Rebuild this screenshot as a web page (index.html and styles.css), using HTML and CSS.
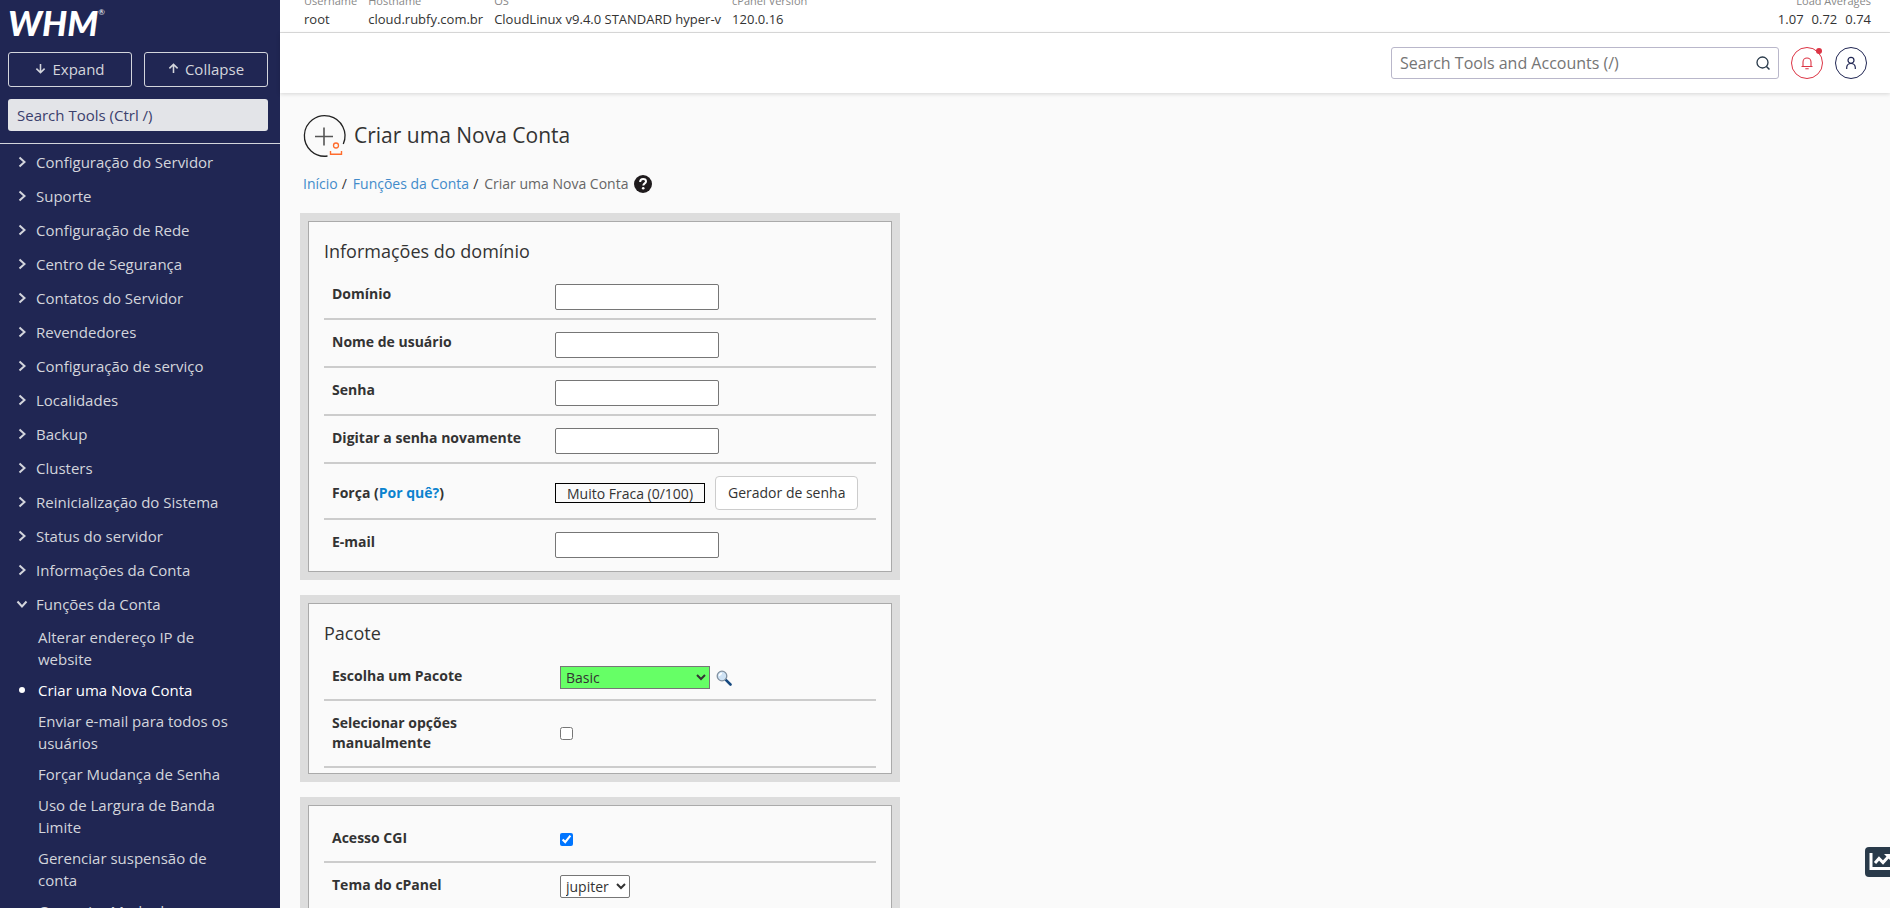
FILE: index.html
```html
<!DOCTYPE html>
<html lang="pt-BR">
<head>
<meta charset="utf-8">
<title>WHM - Criar uma Nova Conta</title>
<link rel="stylesheet" href="styles.css">
</head>
<body>
<svg class="sprite" aria-hidden="true">
  <symbol id="chev" viewBox="0 0 12 12"><path d="M3.500 1.500 8.500 6l-5 4.500" fill="none" stroke="currentColor" stroke-width="2"/></symbol>
</svg>
<div class="app">
  <aside class="sidebar">
    <div class="sidebar-top">
      <a class="logo" href="#">WHM<span class="logo-mark">®</span></a>
      <div class="tree-buttons">
        <button type="button" class="tree-button"><svg class="arrow" viewBox="0 0 12 12"><path d="M6 1v9.500M1.500 6.200 6 10.500l4.500-4.300" fill="none" stroke="currentColor" stroke-width="1.700"/></svg>Expand</button>
        <button type="button" class="tree-button"><svg class="arrow" viewBox="0 0 12 12"><path d="M6 11V1.500M1.500 5.800 6 1.500l4.500 4.300" fill="none" stroke="currentColor" stroke-width="1.700"/></svg>Collapse</button>
      </div>
      <input class="tool-search" type="text" placeholder="Search Tools (Ctrl /)" aria-label="Search Tools">
    </div>
    <nav class="menu">
      <a class="menu-item" href="#"><svg class="chev"><use href="#chev"/></svg>Configuração do Servidor</a>
      <a class="menu-item" href="#"><svg class="chev"><use href="#chev"/></svg>Suporte</a>
      <a class="menu-item" href="#"><svg class="chev"><use href="#chev"/></svg>Configuração de Rede</a>
      <a class="menu-item" href="#"><svg class="chev"><use href="#chev"/></svg>Centro de Segurança</a>
      <a class="menu-item" href="#"><svg class="chev"><use href="#chev"/></svg>Contatos do Servidor</a>
      <a class="menu-item" href="#"><svg class="chev"><use href="#chev"/></svg>Revendedores</a>
      <a class="menu-item" href="#"><svg class="chev"><use href="#chev"/></svg>Configuração de serviço</a>
      <a class="menu-item" href="#"><svg class="chev"><use href="#chev"/></svg>Localidades</a>
      <a class="menu-item" href="#"><svg class="chev"><use href="#chev"/></svg>Backup</a>
      <a class="menu-item" href="#"><svg class="chev"><use href="#chev"/></svg>Clusters</a>
      <a class="menu-item" href="#"><svg class="chev"><use href="#chev"/></svg>Reinicialização do Sistema</a>
      <a class="menu-item" href="#"><svg class="chev"><use href="#chev"/></svg>Status do servidor</a>
      <a class="menu-item" href="#"><svg class="chev"><use href="#chev"/></svg>Informações da Conta</a>
      <a class="menu-item" href="#"><svg class="chev chev-open"><use href="#chev"/></svg>Funções da Conta</a>
      <ul class="submenu">
        <li><a href="#">Alterar endereço IP de website</a></li>
        <li class="current"><a href="#">Criar uma Nova Conta</a></li>
        <li><a href="#">Enviar e-mail para todos os usuários</a></li>
        <li><a href="#">Forçar Mudança de Senha</a></li>
        <li><a href="#">Uso de Largura de Banda Limite</a></li>
        <li><a href="#">Gerenciar suspensão de conta</a></li>
        <li><a href="#">Gerenciar Modo de demonstração</a></li>
      </ul>
    </nav>
  </aside>

  <div class="page">
    <div class="status">
      <dl class="stat"><dt>Username</dt><dd>root</dd></dl>
      <dl class="stat"><dt>Hostname</dt><dd>cloud.rubfy.com.br</dd></dl>
      <dl class="stat"><dt>OS</dt><dd>CloudLinux v9.4.0 STANDARD hyper-v</dd></dl>
      <dl class="stat"><dt>cPanel Version</dt><dd>120.0.16</dd></dl>
      <dl class="stat stat-load"><dt>Load Averages</dt><dd><span>1.07</span><span>0.72</span><span>0.74</span></dd></dl>
    </div>
    <header class="header">
      <div class="search">
        <input type="text" placeholder="Search Tools and Accounts (/)" aria-label="Search Tools and Accounts">
        <button type="button" class="search-button" aria-label="Search"><svg viewBox="0 0 16 16"><circle cx="7.500" cy="7.500" r="5.500" fill="none" stroke="currentColor" stroke-width="1.300"/><path d="m11.500 11.500 3 3" stroke="currentColor" stroke-width="1.500"/></svg></button>
      </div>
      <button type="button" class="round round-alert" aria-label="Notifications">
        <svg viewBox="0 0 14 14"><path d="M1.500 10.500h11M3 10.500V6a4 4 0 0 1 8 0v4.500M5.300 12.800h3.400" fill="none" stroke="currentColor" stroke-width="1.100"/></svg>
        <span class="dot"></span>
      </button>
      <button type="button" class="round" aria-label="Account">
        <svg viewBox="0 0 14 14"><circle cx="7" cy="4.300" r="3" fill="none" stroke="currentColor" stroke-width="1.200"/><path d="M2.700 13V11.500A4.300 4.300 0 0 1 7 7.500a4.300 4.300 0 0 1 4.300 4V13" fill="none" stroke="currentColor" stroke-width="1.200"/></svg>
      </button>
    </header>

    <main class="content">
      <div class="title">
        <svg class="title-icon" viewBox="0 0 42 42"><path d="M40.300 29A20.300 20.300 0 1 0 24.500 41" fill="none" stroke="#222" stroke-width="1.300"/><path d="M21 12.500v18M12 21.500h18" stroke="#555" stroke-width="1.600"/><circle cx="33" cy="30.500" r="2.500" fill="none" stroke="#ff6c2c" stroke-width="1.300"/><path d="M27.500 36v3.200h11V36" fill="none" stroke="#ff6c2c" stroke-width="1.400"/></svg>
        <h1>Criar uma Nova Conta</h1>
      </div>
      <div class="crumbs">
        <a href="#">Início</a><span class="slash">/</span><a href="#">Funções da Conta</a><span class="slash">/</span><span class="here">Criar uma Nova Conta</span>
        <a class="help" href="#" aria-label="Help"><svg viewBox="0 0 18 18"><circle cx="9" cy="9" r="9" fill="#1f1b1d"/><path d="M6.100 7c.1-1.900 1.300-2.900 3-2.900s2.900 1 2.900 2.400c0 1.900-2.700 1.900-2.700 4" fill="none" stroke="#fff" stroke-width="2"/><circle cx="9.200" cy="13.200" r="1.300" fill="#fff"/></svg></a>
      </div>

      <section class="panel">
        <h2>Informações do domínio</h2>
        <div class="row"><label for="domain">Domínio</label><input class="field" id="domain" type="text"></div>
        <div class="row"><label for="user">Nome de usuário</label><input class="field" id="user" type="text"></div>
        <div class="row"><label for="pass">Senha</label><input class="field" id="pass" type="password"></div>
        <div class="row"><label for="pass2">Digitar a senha novamente</label><input class="field" id="pass2" type="password"></div>
        <div class="row row-strength"><span class="name">Força (<a href="#">Por quê?</a>)</span><div class="meter">Muito Fraca (0/100)</div><button type="button" class="generate">Gerador de senha</button></div>
        <div class="row row-last"><label for="mail">E-mail</label><input class="field" id="mail" type="text"></div>
      </section>

      <section class="panel">
        <h2>Pacote</h2>
        <div class="row row-option"><label for="plan">Escolha um Pacote</label><select class="pick pick-plan" id="plan"><option>Basic</option></select>
          <a class="lens" href="#" aria-label="Detalhes"><svg viewBox="0 0 16 16"><path d="m9.800 9.800 4.700 4.700" stroke="#174a80" stroke-width="2.600" stroke-linecap="round"/><circle cx="6" cy="6" r="4.800" fill="#cfe3f5" stroke="#8291a0" stroke-width="1.300"/><path d="M3.500 6A2.600 2.600 0 0 1 6 3.400" fill="none" stroke="#fff" stroke-width="1.500"/></svg></a></div>
        <div class="row row-manual"><label for="manual">Selecionar opções manualmente</label><input class="tick" id="manual" type="checkbox"></div>
      </section>

      <section class="panel panel-plain">
        <div class="row row-option"><label for="cgi">Acesso CGI</label><input class="tick" id="cgi" type="checkbox" checked></div>
        <div class="row row-option"><label for="theme">Tema do cPanel</label><select class="pick" id="theme"><option>jupiter</option></select></div>
      </section>
    </main>
  </div>
</div>
<button type="button" class="stats-tab" aria-label="Statistics"><svg viewBox="0 0 26 20"><path d="M2 1v15.500h24" fill="none" stroke="#fff" stroke-width="3"/><path d="m6 11 4-4.500 4 4L20 4" fill="none" stroke="#fff" stroke-width="3"/><path d="M15 2h7v7z" fill="#fff"/></svg></button>
</body>
</html>
```
FILE: styles.css
```css
* { box-sizing: border-box; }
body {
  margin: 0;
  background: #fafafa;
  color: #333;
  font: 14px/20px "Open Sans", "Noto Sans", sans-serif;
  overflow: hidden;
}
button, input, select { font: inherit; color: inherit; }
a { color: #428bca; text-decoration: none; }
svg { display: block; flex: none; }
.sprite { position: absolute; width: 0; height: 0; }
.app { display: flex; height: 100vh; }

/* Sidebar */
.sidebar {
  flex: none;
  width: 280px;
  overflow: hidden;
  background: #202653;
  color: #d3d5dc;
  font-size: 15px;
}
.sidebar-top {
  display: flex;
  flex-direction: column;
  gap: 12px;
  padding: 4px 12px 12px 8px;
  border-bottom: 1px solid #d3d5dc;
}
.logo {
  display: flex;
  align-items: flex-start;
  height: 36px;
  color: #fff;
  font: italic 900 35px/36px Lato, sans-serif;
}
.logo-mark { font: 8px/16px Lato, sans-serif; }
.tree-buttons { display: flex; gap: 12px; }
.tree-button {
  flex: 1;
  display: flex;
  align-items: center;
  justify-content: center;
  gap: 6px;
  height: 35px;
  padding: 0 0 2px;
  border: 1px solid #d3d5dc;
  border-radius: 3px;
  background: none;
}
.arrow { width: 11px; height: 11px; }
.tool-search {
  width: 100%;
  height: 32px;
  padding: 0 9px 1px;
  border: 0;
  border-radius: 3px;
  background: #e3e4e8;
}
.tool-search::placeholder { color: #3b406d; }
.menu { padding-top: 1px; }
.menu-item {
  display: flex;
  align-items: center;
  gap: 8px;
  height: 34px;
  padding-left: 16px;
  color: inherit;
}
.chev { width: 12px; height: 12px; }
.chev-open { transform: rotate(90deg); }
.submenu {
  display: flex;
  flex-direction: column;
  gap: 9px;
  margin: 0;
  padding: 5px 40px 0 38px;
  list-style: none;
  line-height: 22px;
}
.submenu a { color: inherit; }
.submenu .current { position: relative; color: #fff; }
.current::before {
  content: "";
  position: absolute;
  left: -19px;
  top: 8px;
  width: 6px;
  height: 6px;
  border-radius: 50%;
  background: #fff;
}

/* Top bars */
.page { flex: 1; min-width: 0; }
.status {
  display: flex;
  align-items: flex-end;
  gap: 11px;
  height: 33px;
  padding: 0 19px 4px 24px;
  overflow: hidden;
  border-bottom: 1px solid #ddd;
  background: #fff;
  font-size: 13px;
  line-height: 18px;
}
.stat { margin: 0; }
.stat dt { color: #888; font-size: 11px; }
.stat dd { display: flex; gap: 8px; margin: 0; }
.stat-load { margin-left: auto; text-align: right; }
.stat-load dd { justify-content: flex-end; }
.header {
  display: flex;
  align-items: center;
  justify-content: flex-end;
  gap: 12px;
  height: 60px;
  padding: 0 23px;
  background: #fff;
  box-shadow: 0 1px 4px rgba(0, 0, 0, .15);
}
.search {
  display: flex;
  align-items: center;
  flex: 0 1 388px;
  height: 32px;
  border: 1px solid #b9b7ca;
  border-radius: 3px;
}
.search input {
  flex: 1;
  min-width: 0;
  padding: 0 8px;
  border: 0;
  background: none;
  font-size: 16px;
}
.search input::placeholder { color: #757575; }
.search-button { padding: 0 7px; border: 0; background: none; color: #293a4a; }
.search-button svg { width: 16px; height: 16px; }
.round {
  position: relative;
  display: flex;
  align-items: center;
  justify-content: center;
  width: 32px;
  height: 32px;
  padding: 0;
  border: 1px solid #202653;
  border-radius: 50%;
  background: #fff;
  color: #202653;
}
.round svg { width: 14px; height: 14px; }
.round-alert { border-color: #dc3545; color: #dc3545; }
.dot {
  position: absolute;
  top: 0;
  right: 0;
  width: 6px;
  height: 6px;
  border-radius: 50%;
  background: #dc3545;
}

/* Page content */
.content { padding: 22px 20px 0; }
.title { display: flex; align-items: center; gap: 9px; padding-left: 3px; }
.title-icon { width: 42px; height: 42px; overflow: visible; }
h1 { margin: 0; padding-bottom: 3px; font-size: 21px; font-weight: 400; line-height: 32px; }
.crumbs {
  display: flex;
  align-items: center;
  height: 20px;
  margin: 17px 0 19px;
  padding-left: 3px;
}
.slash { margin: 0 6px 0 4px; }
.here { color: #666; }
.help { margin-left: 6px; }
.help svg { width: 18px; height: 18px; }

.panel {
  max-width: 600px;
  margin-bottom: 15px;
  padding: 0 16px 6px;
  border: 8px solid #ddd;
  box-shadow: inset 0 0 0 1px #aaa;
}
.panel-plain { padding-top: 11px; }
h2 {
  margin: 0;
  padding: 18px 0 9px;
  font-size: 18px;
  font-weight: 400;
  line-height: 24px;
}
.row {
  display: flex;
  align-items: flex-start;
  padding: 12px 8px 8px;
  border-bottom: 2px solid #ccc;
}
.row label, .row .name {
  flex: 0 1 223px;
  font-weight: 700;
}
.name a { color: #0b83cf; }
.row-last { border-bottom: 0; }
.field {
  width: 164px;
  height: 26px;
  border: 1px solid #767676;
  border-radius: 2px;
  background: #fff;
}
.row-strength { align-items: center; }
.meter {
  width: 150px;
  height: 20px;
  margin-right: 10px;
  border: 1px solid #000;
  text-align: center;
}
.generate {
  height: 34px;
  padding: 0 12px;
  border: 1px solid #ccc;
  border-radius: 4px;
  background: #fff;
}
.row-option { padding-bottom: 10px; }
.row-option label, .row-manual label { flex-basis: 228px; padding-right: 70px; }
.row-manual { align-items: center; padding-bottom: 13px; }
.pick {
  height: 23px;
  padding: 0 4px 0 1px;
  border: 1px solid #767676;
  border-radius: 2px;
  background: #fff;
}
.pick-plan { width: 150px; border-radius: 0; background: #6f6; }
.lens { margin: 4px 0 0 6px; }
.lens svg { width: 16px; height: 16px; }
.tick { width: 13px; height: 13px; margin: 5px 0; }

.stats-tab {
  position: fixed;
  right: -10px;
  bottom: 31px;
  width: 35px;
  height: 30px;
  padding: 0 4px;
  border: 0;
  border-radius: 4px;
  background: #293a4a;
}
.stats-tab svg { width: 26px; height: 20px; }
```
